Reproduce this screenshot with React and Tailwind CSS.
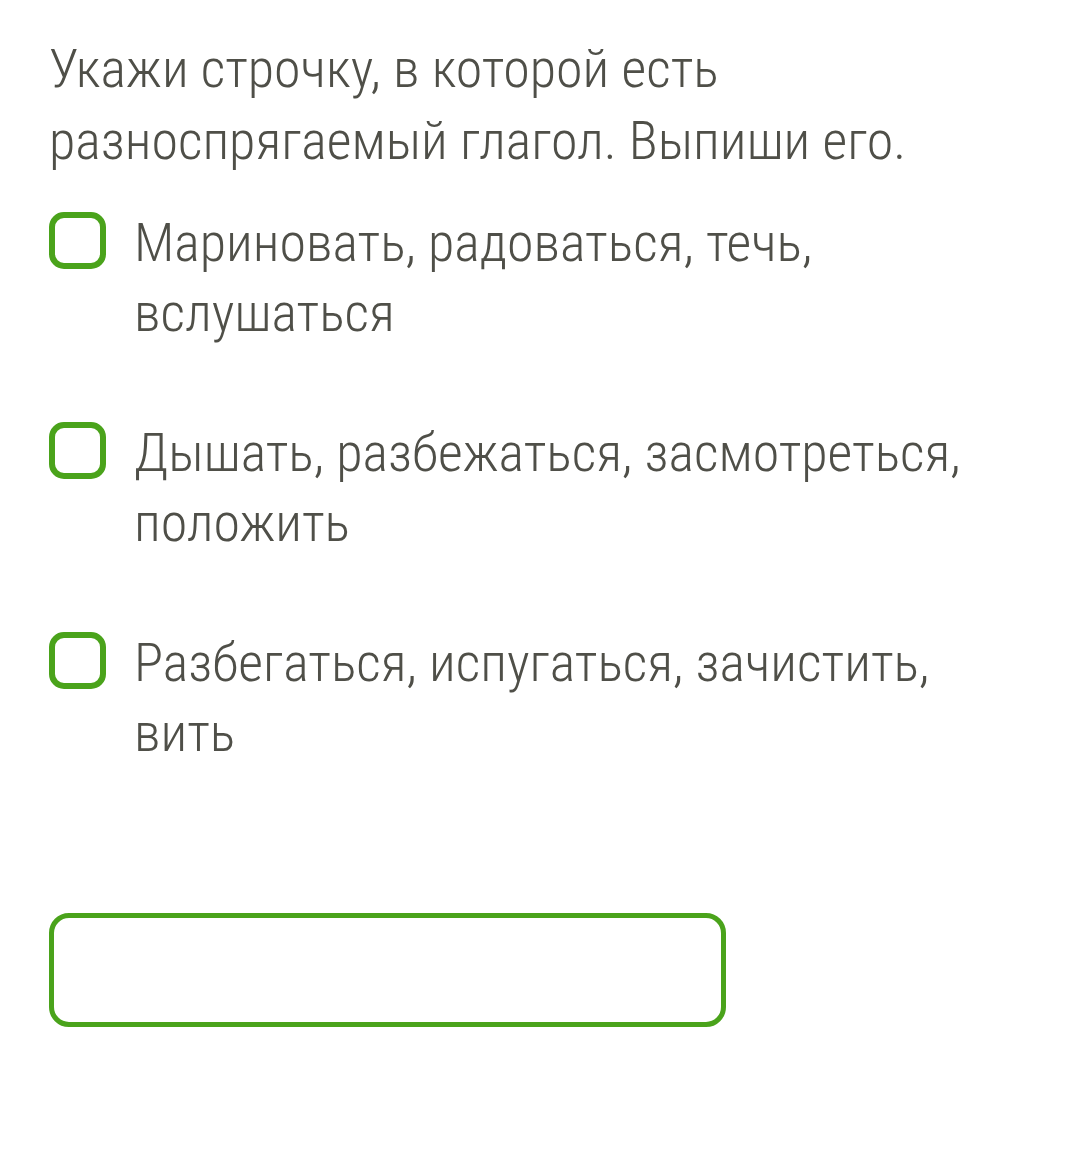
import React from 'react';

const options = [
  'Мариновать, радоваться, течь, вслушаться',
  'Дышать, разбежаться, засмотреться, положить',
  'Разбегаться, испугаться, зачистить, вить',
];

const Checkbox = () => (
  <div className="w-[57px] h-[57px] shrink-0 rounded-[15px] border-[6px] border-[#4aa31b] bg-white mt-[4px]" />
);

export default function App() {
  return (
    <div
      className="min-h-[1161px] w-[1080px] bg-white text-[#4f4f48] font-light pl-[49px] pr-[60px] pt-[33px] overflow-hidden"
      style={{ fontFamily: '"Roboto Condensed Light", "Roboto Condensed", Roboto, sans-serif' }}
    >
      <p className="text-[54px] leading-[72px]">
        Укажи строчку, в которой есть разноспрягаемый глагол. Выпиши его.
      </p>

      <div className="mt-[31px] flex flex-col gap-[70px]">
        {options.map((o) => (
          <label key={o} className="flex items-start gap-[28px]">
            <Checkbox />
            <span className="text-[54px] leading-[70px] pr-[40px]">{o}</span>
          </label>
        ))}
      </div>

      <div className="mt-[145px] w-[677px] h-[114px] rounded-[20px] border-[5px] border-[#4aa31b]" />
    </div>
  );
}
